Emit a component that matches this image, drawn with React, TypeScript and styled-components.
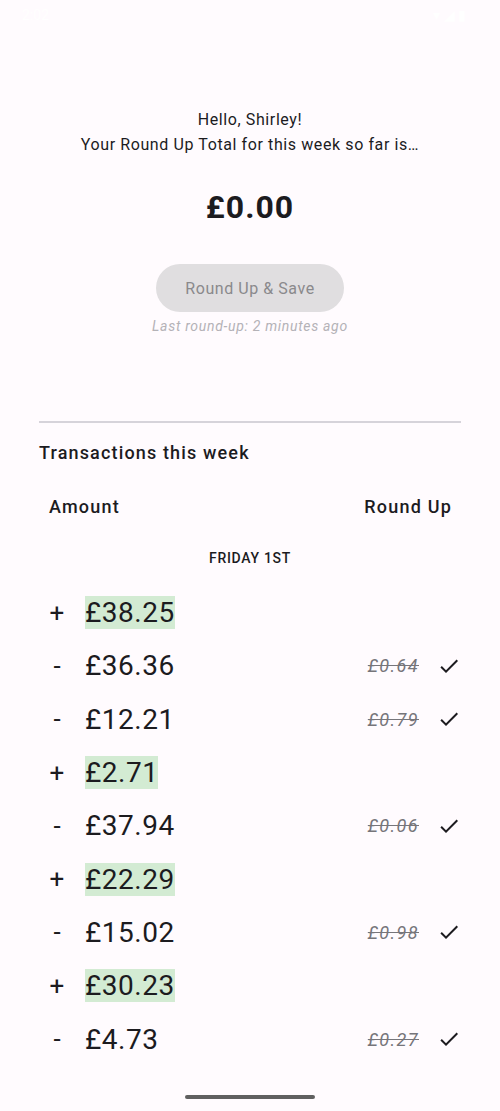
import React from 'react'
import styled, {createGlobalStyle} from 'styled-components'

const GlobalStyle = createGlobalStyle`
  html, body {
    margin: 0;
    padding: 0;
    background: #fffbfe;
    font-family: Roboto, "Noto Sans", sans-serif;
    color: #1c1b1f;
  }
`

type Tx = {sign: '+' | '-'; amount: string; roundUp?: string}

const transactions: Tx[] = [
  {sign: '+', amount: '£38.25'},
  {sign: '-', amount: '£36.36', roundUp: '£0.64'},
  {sign: '-', amount: '£12.21', roundUp: '£0.79'},
  {sign: '+', amount: '£2.71'},
  {sign: '-', amount: '£37.94', roundUp: '£0.06'},
  {sign: '+', amount: '£22.29'},
  {sign: '-', amount: '£15.02', roundUp: '£0.98'},
  {sign: '+', amount: '£30.23'},
  {sign: '-', amount: '£4.73', roundUp: '£0.27'},
]

const CheckIcon = () => (
  <svg width="24" height="24" viewBox="0 0 24 24" fill="#1c1b1f">
    <path d="M9 16.17 4.83 12l-1.42 1.41L9 19 21 7l-1.41-1.41z" />
  </svg>
)

export default function App() {
  return (
    <>
      <GlobalStyle />
      <Screen>
        <StatusBar>
          <span>2:02</span>
          <span>▾ ◢ ▮</span>
        </StatusBar>
        <Summary>
          <Greeting>
            Hello, Shirley!
            <br />
            Your Round Up Total for this week so far is…
          </Greeting>
          <Total>£0.00</Total>
          <SaveButton disabled>Round Up &amp; Save</SaveButton>
          <LastRound>Last round-up: 2 minutes ago</LastRound>
        </Summary>
        <Divider />
        <Section>
          <SectionTitle>Transactions this week</SectionTitle>
          <TableHeader>
            <span>Amount</span>
            <span>Round Up</span>
          </TableHeader>
          <DayLabel>FRIDAY 1ST</DayLabel>
          {transactions.map((tx, i) => (
            <Row key={i}>
              <Sign>{tx.sign}</Sign>
              <Amount $income={tx.sign === '+'}>{tx.amount}</Amount>
              {tx.roundUp && (
                <RoundUp>
                  <Struck>{tx.roundUp}</Struck>
                  <CheckIcon />
                </RoundUp>
              )}
            </Row>
          ))}
        </Section>
        <HomeBar />
      </Screen>
    </>
  )
}

const Screen = styled.div`
  min-height: 1111px;
  display: flex;
  flex-direction: column;
`

const StatusBar = styled.div`
  height: 30px;
  display: flex;
  justify-content: space-between;
  align-items: center;
  padding: 0 34px 0 22px;
  color: #ffffff;
  font-size: 14px;
`

const Summary = styled.div`
  padding-top: 77px;
  display: flex;
  flex-direction: column;
  align-items: center;
`

const Greeting = styled.div`
  font-size: 16px;
  line-height: 25px;
  letter-spacing: 0.6px;
  text-align: center;
`

const Total = styled.div`
  margin-top: 31px;
  font-size: 32px;
  line-height: 38px;
  font-weight: 700;
  letter-spacing: 1px;
`

const SaveButton = styled.button`
  margin-top: 38px;
  width: 188px;
  height: 48px;
  border: none;
  border-radius: 24px;
  background: #e0dee0;
  color: #8a898c;
  font-family: inherit;
  font-size: 16px;
  letter-spacing: 0.55px;
`

const LastRound = styled.div`
  margin-top: 4px;
  font-size: 14px;
  line-height: 20px;
  font-style: italic;
  letter-spacing: 0.7px;
  color: #b4b2b7;
`

const Divider = styled.hr`
  margin: 85px 39px 0;
  border: none;
  border-top: 2px solid #d6d3da;
`

const Section = styled.div`
  padding: 0 39px;
  display: flex;
  flex-direction: column;
`

const SectionTitle = styled.div`
  margin-top: 18px;
  font-size: 18px;
  line-height: 24px;
  font-weight: 500;
  letter-spacing: 1.15px;
`

const TableHeader = styled.div`
  margin-top: 30px;
  padding: 0 9px 0 10px;
  display: flex;
  justify-content: space-between;
  font-size: 18px;
  line-height: 24px;
  font-weight: 500;
  letter-spacing: 1.2px;
`

const DayLabel = styled.div`
  margin-top: 29px;
  margin-bottom: 18px;
  text-align: center;
  font-size: 14px;
  line-height: 20px;
  font-weight: 500;
  letter-spacing: 0.7px;
`

const Row = styled.div`
  height: 53.3px;
  padding-left: 10px;
  display: flex;
  align-items: center;
`

const Sign = styled.span`
  width: 16px;
  text-align: center;
  font-size: 26px;
  margin-right: 20px;
`

const Amount = styled.span<{$income: boolean}>`
  font-size: 28px;
  line-height: 33px;
  letter-spacing: 0.5px;
  background: ${p => (p.$income ? '#d3ebd3' : 'transparent')};
`

const RoundUp = styled.div`
  margin-left: auto;
  display: flex;
  align-items: center;
  gap: 18px;
`

const Struck = styled.span`
  font-size: 18px;
  font-style: italic;
  color: #76757a;
  letter-spacing: 1.4px;
  text-decoration: line-through;
`

const HomeBar = styled.div`
  position: fixed;
  left: 185px;
  bottom: 12px;
  width: 130px;
  height: 4px;
  border-radius: 2px;
  background: #606060;
`
